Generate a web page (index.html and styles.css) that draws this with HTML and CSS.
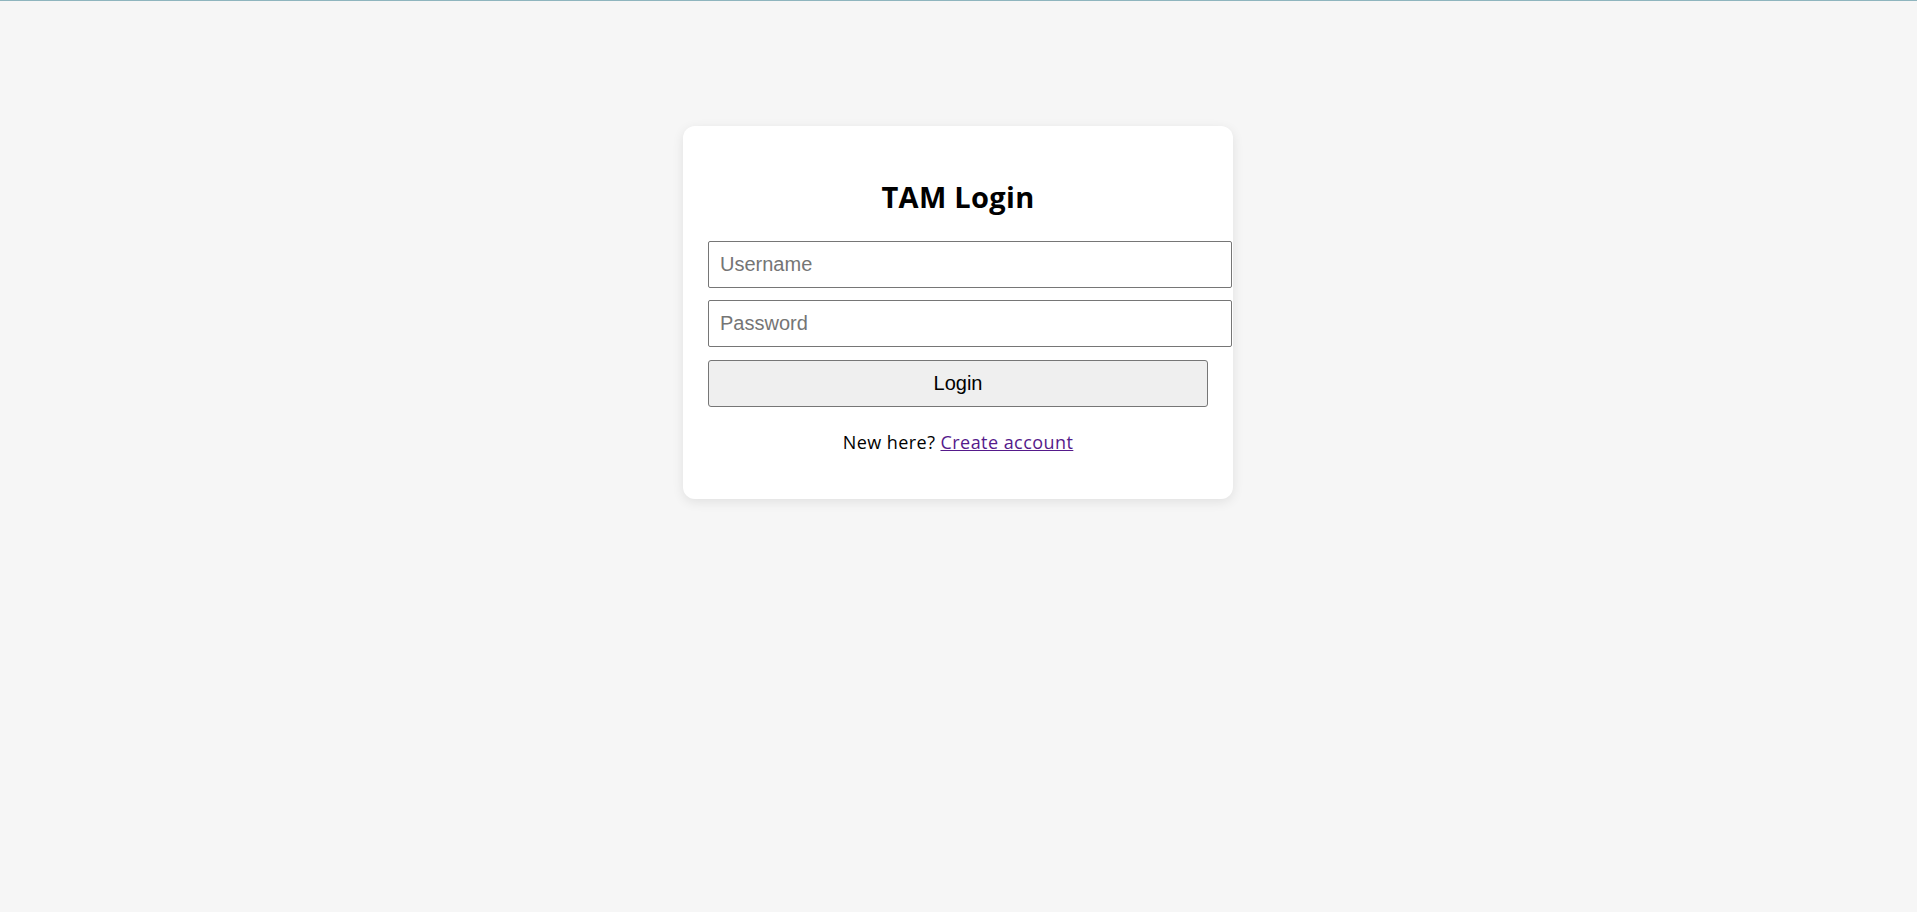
FILE: index.html
```html
<!DOCTYPE html>
<html lang="en">
<head>
<meta charset="utf-8">
<title>TAM Login</title>
<link rel="stylesheet" href="styles.css">
</head>
<body>
<div class="page">
  <form class="card" onsubmit="return false;">
    <h2 class="title">TAM Login</h2>
    <input class="field" type="text" placeholder="Username">
    <input class="field" type="password" placeholder="Password">
    <button class="btn" type="submit">Login</button>
    <p class="note">New here? <a class="link" href="#">Create account</a></p>
  </form>
</div>
</body>
</html>
```

FILE: styles.css
```css
html, body {
  margin: 0;
  padding: 0;
}
body {
  background: #f6f6f6;
  border-top: 1px solid #8fb5be;
  font-family: "Open Sans", "Noto Sans", sans-serif;
  color: #000;
  min-height: 911px;
  box-sizing: border-box;
}
.page {
  display: flex;
  justify-content: center;
  padding: 125px 1px 0 0;
}
.card {
  width: 500px;
  padding: 25px;
  background: #fff;
  border-radius: 12px;
  box-shadow: 0 3px 12px rgba(0, 0, 0, 0.09);
  display: flex;
  flex-direction: column;
  align-items: flex-start;
}
.title {
  align-self: stretch;
  text-align: center;
  font-size: 29px;
  font-weight: 700;
  letter-spacing: 0.3px;
  line-height: 40px;
  margin: 26px 0 24px;
}
.field {
  display: block;
  width: 100%;
  box-sizing: content-box;
  margin: 0 0 12px;
  padding: 11px;
  border: 1px solid #767676;
  border-radius: 2px;
  font-family: "Liberation Sans", Arial, sans-serif;
  font-size: 20px;
  line-height: 23px;
  height: 23px;
  color: #000;
  background: #fff;
  outline: none;
}
.field::placeholder {
  color: #757575;
}
.btn {
  display: block;
  width: 100%;
  box-sizing: border-box;
  margin: 1px 0 0;
  padding: 11px;
  border: 1px solid #767676;
  border-radius: 3px;
  background: #efefef;
  font-family: "Liberation Sans", Arial, sans-serif;
  font-size: 20px;
  line-height: 23px;
  color: #000;
}
.note {
  align-self: stretch;
  text-align: center;
  font-size: 18px;
  letter-spacing: 0.45px;
  line-height: 24px;
  margin: 23px 0 20px;
}
.link {
  color: #551a8b;
  text-decoration: underline;
}
```
